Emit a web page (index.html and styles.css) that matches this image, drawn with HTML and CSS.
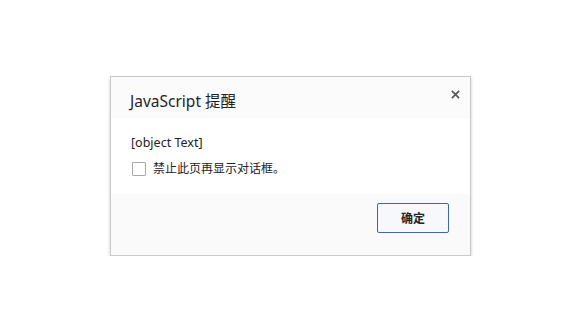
FILE: index.html
```html
<!DOCTYPE html>
<html lang="zh-CN">
<head>
    <meta charset="UTF-8">
    <title>JavaScript 提醒</title>
    <link rel="stylesheet" href="styles.css">
</head>
<body>
    <div class="dialog">
        <div class="dialog-header">
            <h1 class="dialog-title">JavaScript 提醒</h1>
            <button class="close-btn" aria-label="关闭">
                <svg viewBox="0 0 10 10" width="9" height="9">
                    <path d="M1 1 L9 9 M9 1 L1 9" stroke="#555" stroke-width="1.8"/>
                </svg>
            </button>
        </div>
        <div class="dialog-body">
            <p class="message">[object Text]</p>
            <label class="suppress">
                <span class="checkbox"></span>
                禁止此页再显示对话框。
            </label>
        </div>
        <div class="dialog-footer">
            <button class="ok-btn">确定</button>
        </div>
    </div>
</body>
</html>
```

FILE: styles.css
```css
/* --- Base --- */
html, body {
    margin: 0;
    padding: 0;
    background: #fff;
    font-family: 'Noto Sans', 'Noto Sans CJK SC', sans-serif;
    color: #222;
}

body {
    padding: 76px 0 0 110px;
}

/* --- Dialog box --- */
.dialog {
    width: 359px;
    border: 1px solid #c9c9c9;
    background: #fafafa;
    box-shadow: 0 2px 3px rgba(0, 0, 0, 0.22);
}

.dialog-header {
    display: flex;
    justify-content: space-between;
    align-items: flex-start;
    height: 42px;
    padding: 0 10px 0 19px;
    background: #fbfbfb;
}

.dialog-title {
    margin: 12px 0 0;
    font-size: 15.5px;
    font-weight: 400;
    color: #1f1f1f;
}

.close-btn {
    margin-top: 10px;
    padding: 0;
    border: none;
    background: none;
    cursor: pointer;
}

.dialog-body {
    background: #fff;
    padding: 13px 20px 14px;
}

.message {
    margin: 0 0 4px;
    font-size: 12.5px;
    line-height: 22px;
}

.suppress {
    display: flex;
    align-items: center;
    gap: 7px;
    font-size: 12px;
    line-height: 22px;
}

.checkbox {
    width: 12px;
    height: 12px;
    margin-left: 1px;
    border: 1px solid #a9a9a9;
    border-radius: 1px;
    background: #fff;
}

/* --- Footer & button --- */
.dialog-footer {
    display: flex;
    justify-content: flex-end;
    padding: 9px 21px 22px;
}

.ok-btn {
    width: 72px;
    height: 30px;
    border: 1px solid #3d6aa3;
    border-radius: 2px;
    background: #f6f8fc;
    font-family: inherit;
    font-size: 12px;
    font-weight: 700;
    color: #222;
    cursor: pointer;
}
```
